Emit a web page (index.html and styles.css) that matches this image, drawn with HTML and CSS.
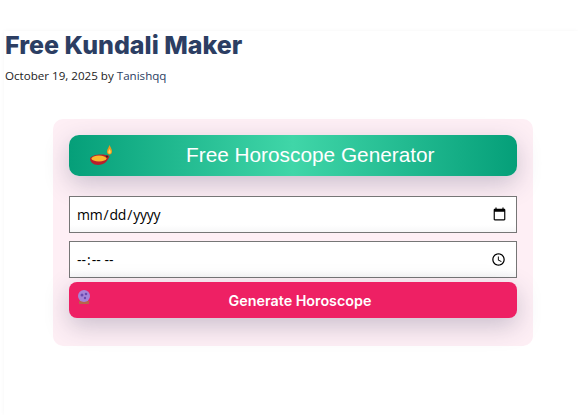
FILE: index.html
```html
<!DOCTYPE html>
<html>
<head>
    <meta charset="UTF-8">
    <title>Free Kundali Maker</title>
    <link rel="stylesheet" href="styles.css">
</head>
<body>

<div class="page">
    <h1 class="post-title">Free Kundali Maker</h1>
    <p class="post-meta">October 19, 2025 by <a href="#">Tanishqq</a></p>

    <div class="card">
        <div class="card-header">
            <svg class="diya" width="24" height="21" viewBox="0 0 24 21">
                <path d="M20.500 0c1.500 3 2.500 4.500 2.500 6.500 0 2-1 3-2.500 3S18 8.500 18 6.500c0-2 1.500-3.500 2.500-6.500z" fill="#ef9a1e"/>
                <path d="M20.500 4c1 1.500 1.200 2 1.200 3 0 1-.5 1.500-1.200 1.500s-1.200-.5-1.200-1.500c0-1 .6-1.500 1.200-3z" fill="#fbd860"/>
                <path d="M1 13.500C2 11 7 9.500 12 9.500c3 0 6 .5 8.500 1.500C19 16 15 20 9 20c-5 0-8-3-8-6.500z" fill="#b8202c"/>
                <ellipse cx="10" cy="13.500" rx="7.500" ry="3" fill="#f8b82e"/>
                <circle cx="18" cy="11.500" r="1" fill="#3a2a1a"/>
            </svg>
            <h2 class="card-title">Free Horoscope Generator</h2>
        </div>

        <form class="horoscope-form">
            <input type="date" name="birth-date">
            <input type="time" name="birth-time">
            <button type="button">
                <svg class="ball" width="14" height="14" viewBox="0 0 14 14">
                    <rect x="2" y="11" width="10" height="3" fill="#b5654a"/>
                    <circle cx="7" cy="6" r="6" fill="#a684d8"/>
                    <circle cx="5" cy="5" r="1.500" fill="#6a4bb0"/>
                    <circle cx="9" cy="4" r="1.300" fill="#6a4bb0"/>
                    <circle cx="8" cy="8" r="1.200" fill="#6a4bb0"/>
                </svg>
                Generate Horoscope
            </button>
        </form>
    </div>
</div>

</body>
</html>
```

FILE: styles.css
```css
body {
    margin: 0;
    background-color: #fff;
    font-family: "Open Sans", sans-serif;
}
.page {
    margin: 31px 0 0 4px;
    padding: 0 1px 0 1px;
    height: 384px;
    box-shadow: 0 0 4px rgba(0, 0, 0, 0.04);
}
.post-title {
    margin: 0;
    font-family: Inter, sans-serif;
    font-size: 25px;
    font-weight: 800;
    line-height: 29px;
    color: #2c3e63;
}
.post-meta {
    margin: 6px 0 0;
    font-size: 11.6px;
    line-height: 20px;
    color: #222;
}
.post-meta a {
    color: #2c3e63;
    text-decoration: none;
}
.card {
    width: 448px;
    margin: 33px 0 0 48px;
    padding: 16px 16px 28px;
    background-color: #feeff5;
    border-radius: 10px;
}
.card-header {
    display: flex;
    align-items: center;
    height: 41px;
    padding-left: 20px;
    background: linear-gradient(90deg, #059f79, #40d6a8, #059f79);
    border-radius: 10px;
    box-shadow: 0 8px 24px rgba(50, 50, 93, 0.25);
}
.card-title {
    margin: 0 0 1px 73px;
    font-family: "Liberation Sans", sans-serif;
    font-size: 20.8px;
    font-weight: 400;
    color: #fff;
}
.horoscope-form {
    display: flex;
    flex-direction: column;
    margin-top: 20px;
}
input {
    box-sizing: border-box;
    height: 37px;
    margin-bottom: 8px;
    padding: 0 7px 0 6px;
    background: linear-gradient(180deg, #fff 80%, #f7f7f8);
    border: 1px solid #767676;
    font-family: "Open Sans", sans-serif;
    font-size: 14px;
    letter-spacing: -0.2px;
}
input::-webkit-calendar-picker-indicator {
    width: 15px;
    height: 15px;
}
button {
    display: block;
    position: relative;
    height: 36px;
    margin-top: -4px;
    padding: 0 0 0 14px;
    background-color: #ee2064;
    border: none;
    border-radius: 8px;
    box-shadow: 0 8px 24px rgba(50, 50, 93, 0.25);
    color: #fff;
    font-family: Inter, sans-serif;
    font-size: 14.3px;
    font-weight: 600;
    cursor: pointer;
}
.ball {
    position: absolute;
    left: 8px;
    top: 8px;
}
```
